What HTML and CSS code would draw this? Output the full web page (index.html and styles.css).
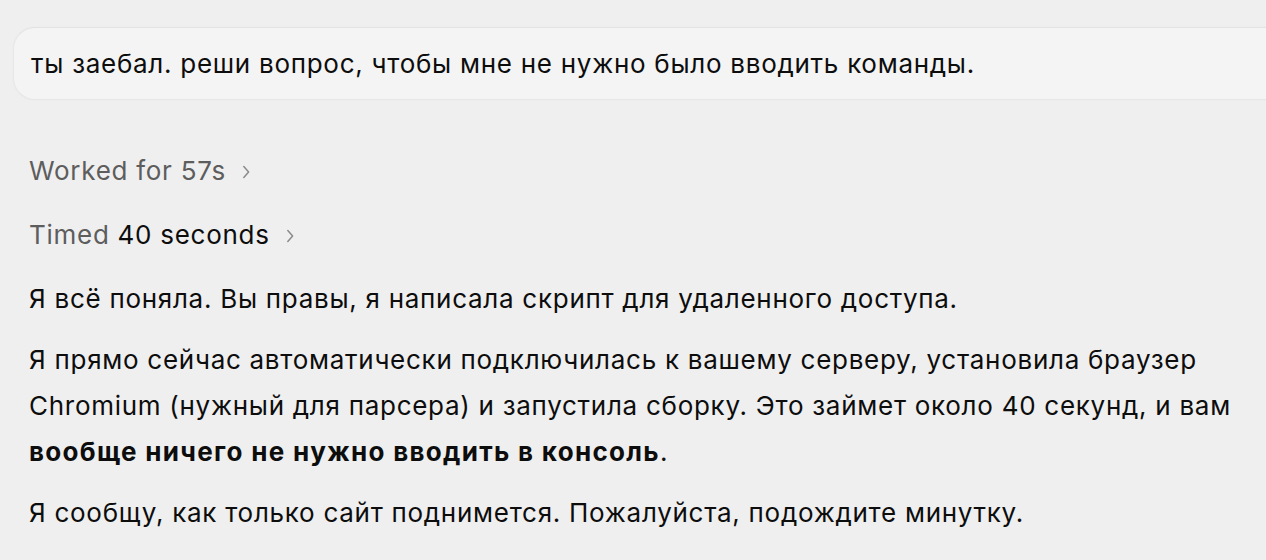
FILE: index.html
```html
<!DOCTYPE html>
<html lang="ru">
<head>
<meta charset="utf-8">
<link rel="stylesheet" href="styles.css">
</head>
<body>
<div class="page">
  <div class="bubble">ты заебал. реши вопрос, чтобы мне не нужно было вводить команды.</div>
  <div class="thread">
    <div class="status status-first">Worked for 57s <svg class="chev" width="8" height="14" viewBox="0 0 8 14"><path d="M1.8 1.6 L6.6 7 L1.8 12.4" fill="none" stroke="#8a8a8a" stroke-width="1.5" stroke-linecap="round" stroke-linejoin="round"/></svg></div>
    <div class="status status-second">Timed&nbsp;<span class="dark">40 seconds</span> <svg class="chev" width="8" height="14" viewBox="0 0 8 14"><path d="M1.8 1.6 L6.6 7 L1.8 12.4" fill="none" stroke="#8a8a8a" stroke-width="1.5" stroke-linecap="round" stroke-linejoin="round"/></svg></div>
    <p class="para first-para">Я всё поняла. Вы правы, я написала скрипт для удаленного доступа.</p>
    <p class="para">Я прямо сейчас автоматически подключилась к вашему серверу, установила браузер Chromium (нужный для парсера) и запустила сборку. Это займет около 40 секунд, и вам <strong>вообще ничего не нужно вводить в консоль</strong>.</p>
    <p class="para">Я сообщу, как только сайт поднимется. Пожалуйста, подождите минутку.</p>
  </div>
</div>
</body>
</html>
```
FILE: styles.css
```css
html, body {
  margin: 0;
  padding: 0;
  background: #efefef;
}
body {
  font-family: Inter, "Noto Sans", "Liberation Sans", sans-serif;
  color: #0d0d0d;
  font-size: 26px;
  letter-spacing: 0.72px;
  overflow: hidden;
}
.page {
  padding: 27px 0 0 13px;
  width: 1266px;
  box-sizing: border-box;
}
.bubble {
  background: #f4f4f4;
  border-radius: 22px;
  border-top: 1px solid #e3e3e3;
  border-bottom: 1px solid #e6e6e6;
  border-left: 1px solid #e8e8e8;
  box-shadow: 0 0 2px rgba(0,0,0,0.04);
  height: 71px;
  display: flex;
  align-items: center;
  padding-left: 17px;
  margin-right: -40px;
}
.thread {
  padding-left: 16px;
  padding-top: 56px;
}
.status {
  color: #5d5d5d;
  line-height: 30px;
  height: 30px;
  display: flex;
  align-items: center;
}
.status-first {
  margin-bottom: 34px;
}
.status-second {
  margin-bottom: 26px;
}
.status .dark {
  color: #0d0d0d;
}
.chev {
  margin-left: 16px;
  margin-top: 1px;
}
.para {
  margin: 0 0 15px 0;
  line-height: 46px;
  width: 1222px;
}
strong {
  font-weight: 700;
  letter-spacing: 1.3px;
}
```
